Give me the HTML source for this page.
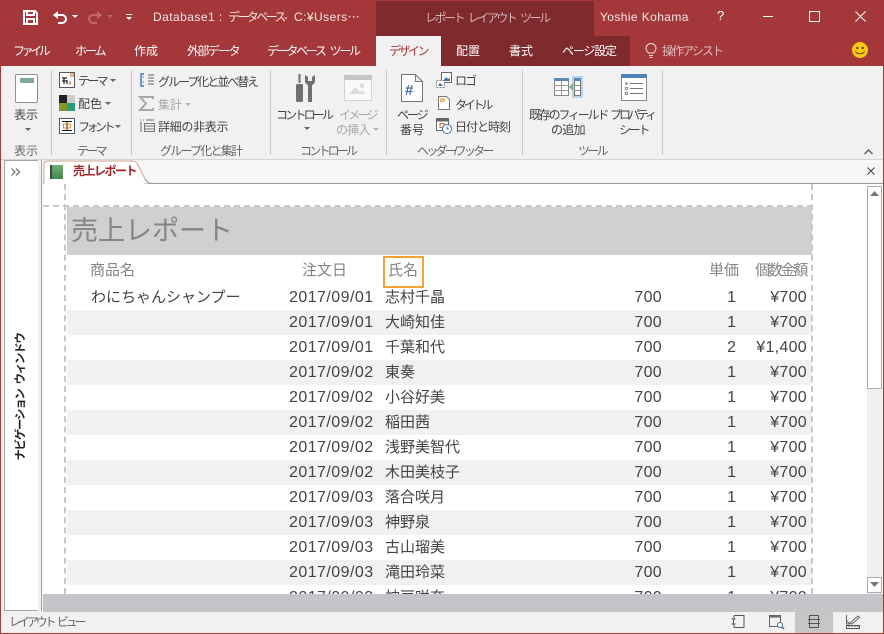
<!DOCTYPE html>
<html lang="ja"><head><meta charset="utf-8"><style>
html,body{margin:0;padding:0}
body{width:884px;height:634px;overflow:hidden;position:relative;background:#f1f1f1;font-family:"Liberation Sans","Noto Sans CJK JP",sans-serif;font-size:12px;color:#444}
.a,.t,.r,.c{position:absolute}
.t{white-space:nowrap;line-height:16px}
.c{text-align:center;white-space:nowrap;line-height:16px}
.w{color:#fff;font-size:12px}
.rb{color:#444;font-size:12px}
.dis{color:#a8a8a8}
.lab{color:#666;font-size:12px}
.sep{position:absolute;top:70px;width:1px;height:85px;background:#c6c6c6}
.r{left:67px;width:745px;height:25px;font-size:15px;color:#444}
.r.g{background:#f1f1f1}
.r span{position:absolute;top:1px;line-height:24px;white-space:nowrap}
.d{left:222px;font-size:16px;letter-spacing:.45px}
.n{left:318px}
.q{right:150px;font-size:16px;letter-spacing:.3px}
.u{right:76px;font-size:16px}
.m{right:5px;font-size:16px;letter-spacing:.3px}
.h{color:#858585;font-size:15px;line-height:20px}
svg{position:absolute;overflow:visible}
</style></head><body>
<!-- title bar -->
<div class="a" style="left:0;top:0;width:884px;height:66px;background:#a4373a"></div>
<div class="a" style="left:376px;top:1px;width:218px;height:35px;background:#7f2a2d"></div>
<div class="a" style="left:441px;top:36px;width:189px;height:30px;background:#7f2a2d"></div>
<div class="a" style="left:376px;top:36px;width:65px;height:30px;background:#f1f1f1"></div>
<svg style="left:23px;top:10px" width="15" height="15" viewBox="0 0 15 15"><path d="M1 1h11l2 2v11H1z M4 1v4h7V1 M4 14V9h7v5" fill="none" stroke="#fff" stroke-width="2"/></svg>
<svg style="left:52px;top:9px" width="16" height="16" viewBox="0 0 16 16"><path d="M2 6h8a4 4 0 0 1 0 8H6" fill="none" stroke="#fff" stroke-width="2"/><path d="M1 6l5-4v8z" fill="#fff"/></svg>
<svg style="left:72px;top:15px" width="6" height="4"><path d="M0 0h6L3 3z" fill="#fff"/></svg>
<svg style="left:87px;top:9px" width="16" height="16" viewBox="0 0 16 16"><path d="M14 6H6a4 4 0 0 0 0 8h4" fill="none" stroke="#c0696b" stroke-width="2"/><path d="M15 6l-5-4v8z" fill="#c0696b"/></svg>
<svg style="left:107px;top:15px" width="6" height="4"><path d="M0 0h6L3 3z" fill="#c0696b"/></svg>
<svg style="left:126px;top:14px" width="6" height="7"><path d="M0 0h6v1H0zM0 3h6L3 6z" fill="#fff"/></svg>
<div class="t w" style="left:153px;top:9px;color:#f4e6e6;letter-spacing:.45px">Database1 :</div>
<div class="t w" style="left:228px;top:9px;color:#f4e6e6;letter-spacing:-2.6px">データベース-</div>
<div class="t w" style="left:294px;top:9px;color:#f4e6e6;letter-spacing:.45px">C:¥Users⋯</div>
<div class="t" style="left:425px;top:10px;color:#d9b3b4;letter-spacing:-2.5px;word-spacing:4px">レポート レイアウト ツール</div>
<div class="t w" style="left:600px;top:9px;color:#f4e6e6;letter-spacing:.4px">Yoshie Kohama</div>
<div class="t w" style="left:717px;top:8px;font-size:13px">?</div>
<div class="a" style="left:763px;top:16px;width:10px;height:1px;background:#fff"></div>
<div class="a" style="left:809px;top:11px;width:9px;height:9px;border:1px solid #fff"></div>
<svg style="left:855px;top:11px" width="11" height="11"><path d="M.5.5l10 10M10.5.5l-10 10" stroke="#fff"/></svg>
<!-- tabs -->
<div class="t w" style="left:13px;top:43px;letter-spacing:-3.4px">ファイル</div>
<div class="t w" style="left:75px;top:43px;letter-spacing:-2px">ホーム</div>
<div class="t w" style="left:134px;top:43px">作成</div>
<div class="t w" style="left:187px;top:43px;letter-spacing:-1.6px">外部データ</div>
<div class="t w" style="left:267px;top:43px;letter-spacing:-2.3px;word-spacing:4px">データベース ツール</div>
<div class="t" style="left:389px;top:43px;color:#a4373a;letter-spacing:-2.5px">デザイン</div>
<div class="t w" style="left:456px;top:43px">配置</div>
<div class="t w" style="left:509px;top:43px">書式</div>
<div class="t w" style="left:562px;top:43px;letter-spacing:-1.2px">ページ設定</div>
<svg style="left:645px;top:43px" width="12" height="16" viewBox="0 0 12 16"><path d="M3.5 10C2 8.500 1 7.500 1 5.500a5 5 0 0 1 10 0c0 2-1 3-2.500 4.500zM4 12.500h4M4.500 14.500h3" fill="none" stroke="#f3dede"/></svg>
<div class="t" style="left:662px;top:43px;color:#e0bcbc;letter-spacing:-1.9px">操作アシスト</div>
<svg style="left:851px;top:41px" width="18" height="18"><circle cx="9" cy="9" r="8" fill="#fdc814"/><circle cx="6.300" cy="7" r="1.200" fill="#5a4a10"/><circle cx="11.700" cy="7" r="1.200" fill="#5a4a10"/><path d="M4.500 10.500c1.500 3 7.500 3 9 0" fill="none" stroke="#5a4a10"/></svg>
<!-- ribbon -->
<div class="a" style="left:0;top:66px;width:1px;height:568px;background:#a4373a"></div>
<div class="a" style="left:883px;top:66px;width:1px;height:568px;background:#a4373a"></div>
<div class="a" style="left:1px;top:159px;width:882px;height:1px;background:#d4d4d4"></div>
<div class="sep" style="left:51px"></div><div class="sep" style="left:131px"></div><div class="sep" style="left:270px"></div><div class="sep" style="left:386px"></div><div class="sep" style="left:522px"></div><div class="sep" style="left:662px"></div>
<!-- view -->
<div class="a" style="left:15px;top:74px;width:21px;height:27px;background:#fff;border:1px solid #8f8f8f;border-radius:2px"></div>
<div class="a" style="left:20px;top:78px;width:14px;height:5px;background:#7fab9c"></div>
<div class="t rb" style="left:14px;top:107px">表示</div>
<svg style="left:25px;top:128px" width="6" height="4"><path d="M0 0h6L3 3z" fill="#666"/></svg>
<div class="t lab" style="left:14px;top:143px">表示</div>
<!-- theme -->
<svg style="left:59px;top:72px" width="16" height="16"><rect x=".5" y=".5" width="15" height="15" fill="#fff" stroke="#556"/><rect x="11" y="1" width="4" height="4" fill="#e5b27a"/><path d="M3 6h5M3 9h5M5 6v6M8 8v4" stroke="#222" stroke-width="1.200"/><path d="M11 9v4" stroke="#e08a3a" stroke-width="1.500"/></svg>
<div class="t rb" style="left:78px;top:73px;letter-spacing:-2.7px">テーマ</div>
<svg style="left:110px;top:79px" width="6" height="4"><path d="M0 0h6L3 3z" fill="#666"/></svg>
<svg style="left:59px;top:95px" width="16" height="16"><rect width="8" height="8" fill="#222"/><rect x="8" width="8" height="8" fill="#ccc"/><rect y="8" width="8" height="8" fill="#829726"/><rect x="8" y="8" width="8" height="8" fill="#2f9a78"/></svg>
<div class="t rb" style="left:78px;top:96px">配色</div>
<svg style="left:105px;top:102px" width="6" height="4"><path d="M0 0h6L3 3z" fill="#666"/></svg>
<svg style="left:59px;top:118px" width="16" height="16"><rect x=".5" y=".5" width="15" height="15" fill="#fff" stroke="#4a5568"/><path d="M3 3.500h10M3 12.500h10M8 3v10" stroke="#111"/><rect x="4.500" y="6" width="7" height="4" fill="none" stroke="#e08a1e"/></svg>
<div class="t rb" style="left:78px;top:119px;letter-spacing:-3.5px">フォント</div>
<svg style="left:115px;top:125px" width="6" height="4"><path d="M0 0h6L3 3z" fill="#666"/></svg>
<div class="t lab" style="left:77px;top:143px;letter-spacing:-2.7px">テーマ</div>
<!-- group -->
<svg style="left:140px;top:73px" width="15" height="14"><path d="M4 1H1v12h3" fill="none" stroke="#4b7fb5" stroke-width="1.500"/><path d="M4 4H2.500M4 9H2.500" stroke="#4b7fb5"/><path d="M8 2h6M8 5h6M8 8h6M8 11h6" stroke="#666"/></svg>
<div class="t rb" style="left:158px;top:74px;letter-spacing:-2px">グループ化と並べ替え</div>
<svg style="left:139px;top:96px" width="15" height="15"><path d="M14 3V1H1l6 6.500L1 14h13v-2" fill="none" stroke="#a9a9a9" stroke-width="2"/></svg>
<div class="t rb dis" style="left:158px;top:97px">集計</div>
<svg style="left:185px;top:103px" width="6" height="4"><path d="M0 0h6L3 3z" fill="#b5b5b5"/></svg>
<svg style="left:140px;top:118px" width="15" height="15"><path d="M0 2h1M3 2h1M6 2h8M1 4v10" stroke="#666"/><rect x="4.500" y="5.500" width="10" height="8" fill="none" stroke="#777"/><path d="M4 8h10M4 11h10" stroke="#777"/></svg>
<div class="t rb" style="left:158px;top:119px;letter-spacing:-.3px">詳細の非表示</div>
<div class="t lab" style="left:160px;top:143px;letter-spacing:-1.75px">グループ化と集計</div>
<!-- controls -->
<svg style="left:296px;top:74px" width="20" height="28" viewBox="0 0 20 28"><path d="M2.500 0h2v9h-2z" fill="#707070"/><rect x="0" y="10" width="7" height="18" rx="1.500" fill="#707070"/><path d="M9 1v6c0 2 1.500 3.500 3 4v17h4V11c1.500-.5 3-2 3-4V1l-3 2v4h-4V3z" fill="#707070"/></svg>
<div class="t rb" style="left:276px;top:107px;letter-spacing:-2.8px">コントロール</div>
<svg style="left:304px;top:127px" width="6" height="4"><path d="M0 0h6L3 3z" fill="#666"/></svg>
<div class="a" style="left:344px;top:75px;width:26px;height:20px;background:#fafafa;border:1px solid #d4cfd2;border-top:5px solid #c4c4c4"></div>
<svg style="left:348px;top:82px" width="20" height="13"><circle cx="14" cy="3.500" r="2.500" fill="#ddd"/><path d="M1 12l6-7 5 5 2-2 4 4z" fill="#ddd"/></svg>
<div class="t rb dis" style="left:339px;top:107px;letter-spacing:-2.75px">イメージ</div>
<div class="t rb dis" style="left:336px;top:122px;letter-spacing:-.7px">の挿入</div>
<svg style="left:373px;top:128px" width="6" height="4"><path d="M0 0h6L3 3z" fill="#b5b5b5"/></svg>
<div class="t lab" style="left:300px;top:143px;letter-spacing:-2.8px">コントロール</div>
<!-- header footer -->
<svg style="left:401px;top:74px" width="22" height="28"><path d="M.5.500h14l7 7v20H.5z M14.500.500v7h7" fill="#fff" stroke="#777"/></svg>
<div class="t" style="left:405px;top:83px;color:#3f73ad;font-weight:bold;font-size:15px">#</div>
<div class="t rb" style="left:397px;top:107px;letter-spacing:-2px">ページ</div>
<div class="t rb" style="left:400px;top:122px">番号</div>
<svg style="left:436px;top:72px" width="16" height="16"><rect x="5.500" y=".5" width="10" height="10" fill="#fff" stroke="#666"/><path d="M7 9l3-4 2 2 2-1v3z" fill="#3f73ad"/><rect x=".5" y="8.500" width="8" height="7" fill="#fff" stroke="#888" stroke-dasharray="2 1"/><path d="M2 14l2-3 3 3z" fill="#3f73ad"/></svg>
<div class="t rb" style="left:455px;top:73px;letter-spacing:-2px">ロゴ</div>
<svg style="left:438px;top:96px" width="12" height="14"><path d="M.5.500h8l3 3v10H.5z" fill="#fff" stroke="#777"/><rect x="2" y="2" width="5" height="4" fill="#ebc27c"/></svg>
<div class="t rb" style="left:455px;top:97px;letter-spacing:-3.2px">タイトル</div>
<svg style="left:436px;top:118px" width="16" height="16"><rect x=".5" y=".5" width="12" height="12" fill="#fff" stroke="#666"/><rect x="1" y="1" width="11" height="2.500" fill="#666"/><rect x="4" y="5.500" width="4" height="4" fill="none" stroke="#d9622b"/><circle cx="11" cy="11" r="4.500" fill="#fff" stroke="#3f73ad"/><path d="M11 8.500V11h2" fill="none" stroke="#3f73ad"/></svg>
<div class="t rb" style="left:455px;top:119px;letter-spacing:-1px">日付と時刻</div>
<div class="t lab" style="left:417px;top:143px;letter-spacing:-2.75px">ヘッダー/フッター</div>
<!-- tools -->
<svg style="left:554px;top:76px" width="32" height="22"><rect x=".5" y="2.500" width="14" height="17" fill="#fff" stroke="#888"/><rect x="0" y="2" width="15" height="3" fill="#5b86b7"/><path d="M0 9.500h14M0 14.500h14M7.500 5v14" stroke="#999"/><rect x="18" y="0" width="11" height="22" fill="#bdd3e7"/><rect x="20.500" y="2.500" width="6" height="17" fill="#fff" stroke="#777"/><rect x="20" y="2" width="7" height="3" fill="#5b86b7"/><path d="M20 9.500h7M20 14.500h7" stroke="#888"/><path d="M15 11l4-4v8z" fill="#76ad98"/></svg>
<div class="t rb" style="left:529px;top:107px;letter-spacing:-2.2px">既存のフィールド</div>
<div class="t rb" style="left:551px;top:122px;letter-spacing:-.7px">の追加</div>
<div class="a" style="left:621px;top:74px;width:24px;height:22px;background:#fff;border:1px solid #888;border-top:4px solid #4f81bd"></div>
<svg style="left:624px;top:81px" width="20" height="16"><path d="M6 2.500h13M6 7.500h13M6 12.500h13" stroke="#777"/><circle cx="2.500" cy="2.500" r="1.300" fill="#888"/><circle cx="2.500" cy="7.500" r="1.300" fill="none" stroke="#888"/><circle cx="2.500" cy="12.500" r="1.300" fill="none" stroke="#888"/></svg>
<div class="t rb" style="left:610px;top:107px;letter-spacing:-3px">プロパティ</div>
<div class="t rb" style="left:619px;top:122px;letter-spacing:-2.3px">シート</div>
<div class="t lab" style="left:578px;top:143px;letter-spacing:-2.7px">ツール</div>
<svg style="left:864px;top:149px" width="9" height="6"><path d="M.5 5l4-4 4 4" fill="none" stroke="#666" stroke-width="1.500"/></svg>
<!-- nav pane -->
<div class="a" style="left:4px;top:160px;width:33px;height:449px;background:#fff;border:1px solid #a0a3a9"></div>
<div class="a" style="left:38px;top:160px;width:3px;height:451px;background:#f1f1f1;border-right:1px solid #a0a3a9"></div>
<svg style="left:11px;top:168px" width="9" height="9"><path d="M.5.5l3.500 3.500-3.500 3.500M5 .5l3.500 3.500L5 7.500" fill="none" stroke="#666" stroke-width="1.200"/></svg>
<div class="t" style="left:-49px;top:389px;width:140px;text-align:center;transform:rotate(-90deg);font-weight:bold;color:#222;font-size:11.500px;letter-spacing:-1.3px;word-spacing:3px">ナビゲーション ウィンドウ</div>
<!-- doc area -->
<div class="a" style="left:43px;top:160px;width:840px;height:24px;background:#f6f6f6"></div>
<div class="a" style="left:43px;top:183px;width:840px;height:1px;background:#9a9a9a"></div>
<div class="a" style="left:43px;top:184px;width:840px;height:410px;background:#fff"></div>
<svg style="left:43px;top:160px" width="108" height="25"><path d="M1 24V5q0-4 4-4h85q3 0 5 4l7 14q2 4 6 4.500" fill="#fff" stroke="#c9a88e"/><path d="M102 19q2 4 6 4.500" fill="none" stroke="#9a9a9a"/><rect x="1" y="23" width="100" height="2" fill="#fff"/></svg>
<div class="a" style="left:50px;top:165px;width:13px;height:14px;background:linear-gradient(#6fae76,#3f8a4d);border-left:2px solid #444;box-sizing:border-box"></div>
<div class="t" style="left:73px;top:163px;color:#a4262c;font-weight:bold;letter-spacing:-1.5px">売上レポート</div>
<svg style="left:867px;top:167px" width="8" height="8"><path d="M.5.500l7 7M7.500.500l-7 7" stroke="#444"/></svg>
<!-- report -->
<div class="a" style="left:67px;top:207px;width:745px;height:48px;background:#d0d0d0"></div>
<div class="t" style="left:71px;top:215px;font-size:27px;line-height:32px;color:#848484">売上レポート</div>
<div class="t h" style="left:90px;top:261px">商品名</div>
<div class="t h" style="left:302px;top:261px">注文日</div>
<div class="t h" style="left:388px;top:261px">氏名</div>
<div class="a" style="left:383px;top:256px;width:37px;height:28px;border:2px solid #f6a335"></div>
<div class="t h" style="left:709px;top:261px">単価</div>
<div class="t h" style="left:755px;top:261px;letter-spacing:-2.2px">個数金額</div>
<div class="a" style="left:67px;top:285px;width:745px;height:309px;overflow:hidden">
<div class="r" style="left:0;top:0"><span style="left:24px">わにちゃんシャンプー</span><span class="d">2017/09/01</span><span class="n">志村千晶</span><span class="q">700</span><span class="u">1</span><span class="m">¥700</span></div>
<div class="r g" style="left:0;top:25px"><span class="d">2017/09/01</span><span class="n">大崎知佳</span><span class="q">700</span><span class="u">1</span><span class="m">¥700</span></div>
<div class="r" style="left:0;top:50px"><span class="d">2017/09/01</span><span class="n">千葉和代</span><span class="q">700</span><span class="u">2</span><span class="m">¥1,400</span></div>
<div class="r g" style="left:0;top:75px"><span class="d">2017/09/02</span><span class="n">東奏</span><span class="q">700</span><span class="u">1</span><span class="m">¥700</span></div>
<div class="r" style="left:0;top:100px"><span class="d">2017/09/02</span><span class="n">小谷好美</span><span class="q">700</span><span class="u">1</span><span class="m">¥700</span></div>
<div class="r g" style="left:0;top:125px"><span class="d">2017/09/02</span><span class="n">稲田茜</span><span class="q">700</span><span class="u">1</span><span class="m">¥700</span></div>
<div class="r" style="left:0;top:150px"><span class="d">2017/09/02</span><span class="n">浅野美智代</span><span class="q">700</span><span class="u">1</span><span class="m">¥700</span></div>
<div class="r g" style="left:0;top:175px"><span class="d">2017/09/02</span><span class="n">木田美枝子</span><span class="q">700</span><span class="u">1</span><span class="m">¥700</span></div>
<div class="r" style="left:0;top:200px"><span class="d">2017/09/03</span><span class="n">落合咲月</span><span class="q">700</span><span class="u">1</span><span class="m">¥700</span></div>
<div class="r g" style="left:0;top:225px"><span class="d">2017/09/03</span><span class="n">神野泉</span><span class="q">700</span><span class="u">1</span><span class="m">¥700</span></div>
<div class="r" style="left:0;top:250px"><span class="d">2017/09/03</span><span class="n">古山瑠美</span><span class="q">700</span><span class="u">1</span><span class="m">¥700</span></div>
<div class="r g" style="left:0;top:275px"><span class="d">2017/09/03</span><span class="n">滝田玲菜</span><span class="q">700</span><span class="u">1</span><span class="m">¥700</span></div>
<div class="r" style="left:0;top:300px"><span class="d">2017/09/03</span><span class="n">神戸咲奈</span><span class="q">700</span><span class="u">1</span><span class="m">¥700</span></div>
</div>
<!-- dashed guides -->
<div class="a" style="left:64px;top:184px;width:0;height:410px;border-left:2px dashed #c8c8c8"></div>
<div class="a" style="left:811px;top:184px;width:0;height:410px;border-left:2px dashed #c8c8c8"></div>
<div class="a" style="left:43px;top:205px;width:770px;height:0;border-top:2px dashed #c8c8c8"></div>
<!-- scrollbar -->
<div class="a" style="left:867px;top:186px;width:15px;height:408px;background:#f0f0f0"></div>
<div class="a" style="left:867px;top:186px;width:13px;height:14px;background:#fff;border:1px solid #ababab"></div>
<svg style="left:870px;top:191px" width="9" height="5"><path d="M0 5l4.500-5L9 5z" fill="#777"/></svg>
<div class="a" style="left:867px;top:201px;width:13px;height:187px;background:#fff;border:1px solid #ababab;border-top:none"></div>
<div class="a" style="left:867px;top:577px;width:13px;height:14px;background:#fff;border:1px solid #ababab"></div>
<svg style="left:870px;top:582px" width="9" height="5"><path d="M0 0l4.500 5L9 0z" fill="#777"/></svg>
<!-- bottom -->
<div class="a" style="left:43px;top:594px;width:840px;height:18px;background:#c4c5c8"></div>
<div class="a" style="left:1px;top:612px;width:882px;height:21px;background:#f1f1f1"></div>
<div class="a" style="left:0;top:633px;width:884px;height:1px;background:#a4373a"></div>
<div class="t" style="left:9px;top:614px;color:#666;letter-spacing:-3.1px;word-spacing:3px">レイアウト ビュー</div>
<div class="a" style="left:795px;top:612px;width:38px;height:21px;background:#c6c6c6"></div>
<svg style="left:731px;top:614px" width="14" height="15"><path d="M3 1.500h10v12H3M3 1.500v3M3 10.500v3M.5 5h4M.5 10h4M2.500 5v5" fill="none" stroke="#555"/></svg>
<svg style="left:769px;top:614px" width="16" height="16"><path d="M.5 1.500h11v11H.5z" fill="none" stroke="#666"/><rect x="1" y="1" width="11" height="2.500" fill="#666"/><circle cx="11" cy="11" r="2.500" fill="#fff" stroke="#3f6b8f"/><path d="M13 13l2 2" stroke="#3f6b8f" stroke-width="1.500"/></svg>
<svg style="left:807px;top:614px" width="14" height="15"><path d="M2.500 1.500h9v12h-9zM1 5.500h12M1 9.500h12" fill="none" stroke="#555"/></svg>
<svg style="left:845px;top:613px" width="16" height="17"><path d="M1.500 2v9h3L1.500 7M5 10L13 3l1.500 1.500L7 11z" fill="none" stroke="#666"/><path d="M1.500 12.500h13v3h-13zM4 12.500v1.500M7 12.500v1.500M10 12.500v1.500M13 12.500v1.500" fill="none" stroke="#555"/></svg>
</body></html>
